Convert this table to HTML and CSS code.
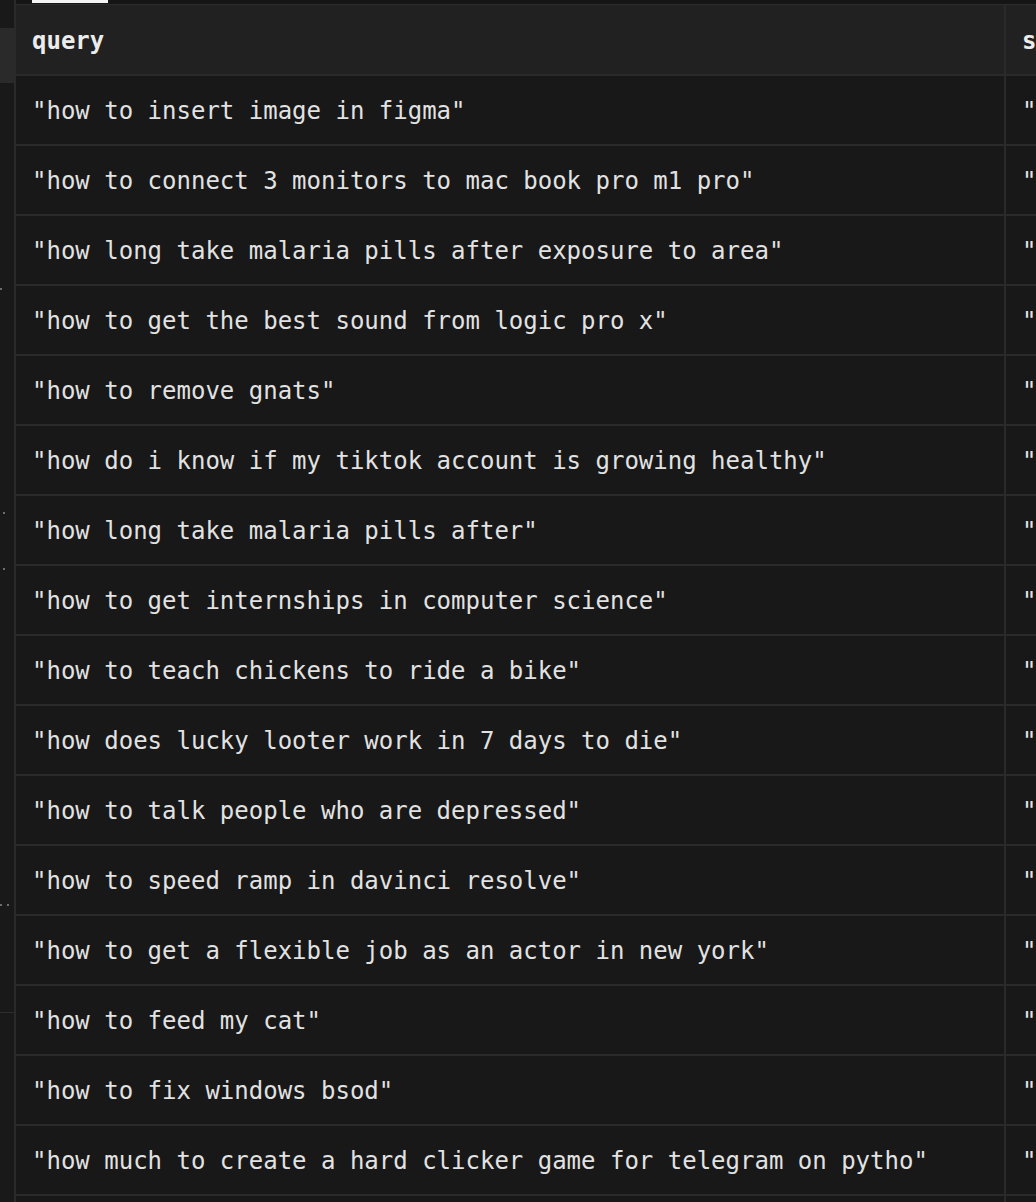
FILE: index.html
```html
<!DOCTYPE html>
<html lang="en">
<head>
<meta charset="utf-8">
<title>Query table</title>
<link rel="stylesheet" href="styles.css">
</head>
<body>
<div class="app">
  <aside class="rail">
    <div class="rail-block"></div>
    <span class="dot d1"></span>
    <span class="dot d2"></span>
    <span class="dot d3"></span>
    <div class="dot-pair"><span class="dot"></span><span class="dot"></span></div>
    <div class="rail-line"></div>
  </aside>
  <main class="pane">
    <div class="tabs"><span class="tab-active"></span></div>
    <div class="table">
      <div class="row head"><div class="cell">query</div><div class="cell">s</div></div>
      <div class="row"><div class="cell">"how to insert image in figma"</div><div class="cell">"</div></div>
      <div class="row"><div class="cell">"how to connect 3 monitors to mac book pro m1 pro"</div><div class="cell">"</div></div>
      <div class="row"><div class="cell">"how long take malaria pills after exposure to area"</div><div class="cell">"</div></div>
      <div class="row"><div class="cell">"how to get the best sound from logic pro x"</div><div class="cell">"</div></div>
      <div class="row"><div class="cell">"how to remove gnats"</div><div class="cell">"</div></div>
      <div class="row"><div class="cell">"how do i know if my tiktok account is growing healthy"</div><div class="cell">"</div></div>
      <div class="row"><div class="cell">"how long take malaria pills after"</div><div class="cell">"</div></div>
      <div class="row"><div class="cell">"how to get internships in computer science"</div><div class="cell">"</div></div>
      <div class="row"><div class="cell">"how to teach chickens to ride a bike"</div><div class="cell">"</div></div>
      <div class="row"><div class="cell">"how does lucky looter work in 7 days to die"</div><div class="cell">"</div></div>
      <div class="row"><div class="cell">"how to talk people who are depressed"</div><div class="cell">"</div></div>
      <div class="row"><div class="cell">"how to speed ramp in davinci resolve"</div><div class="cell">"</div></div>
      <div class="row"><div class="cell">"how to get a flexible job as an actor in new york"</div><div class="cell">"</div></div>
      <div class="row"><div class="cell">"how to feed my cat"</div><div class="cell">"</div></div>
      <div class="row"><div class="cell">"how to fix windows bsod"</div><div class="cell">"</div></div>
      <div class="row"><div class="cell">"how much to create a hard clicker game for telegram on pytho"</div><div class="cell">"</div></div>
      <div class="row"><div class="cell"></div><div class="cell"></div></div>
    </div>
  </main>
</div>
</body>
</html>
```

FILE: styles.css
```css
html, body {
  margin: 0;
  padding: 0;
  height: 100%;
  overflow: hidden;
  background: #181818;
}

.app {
  display: flex;
  height: 1202px;
  width: 1036px;
  overflow: hidden;
}

.rail {
  flex: 0 0 14px;
  width: 14px;
  border-right: 2px solid #2a2a2a;
  background: #191919;
  display: flex;
  flex-direction: column;
}

.rail-block {
  margin-top: 28px;
  height: 55px;
  background: #2a2a2a;
}

.dot {
  display: block;
  width: 2px;
  height: 2px;
  border-radius: 1px;
  background: #8a8a8a;
}

.d1 { margin-top: 205px; margin-left: 0; }
.d2 { margin-top: 222px; margin-left: 3px; }
.d3 { margin-top: 54px; margin-left: 3px; }

.dot-pair {
  display: flex;
  gap: 5px;
  margin-top: 334px;
}

.rail-line {
  margin-top: 106px;
  height: 1px;
  background: #2e2e2e;
}

.pane {
  flex: 1 1 auto;
  min-width: 0;
  display: flex;
  flex-direction: column;
  background: #181818;
}

.tabs {
  height: 4px;
  background: #151515;
  padding-left: 16px;
  flex: 0 0 4px;
}

.tab-active {
  display: block;
  width: 76px;
  height: 3px;
  background: #f4f4f4;
}

.table {
  display: flex;
  flex-direction: column;
  border-top: 1px solid #2c2c2c;
}

.row {
  display: grid;
  grid-template-columns: 988px 400px;
  height: 70px;
  border-top: 2px solid #2a2a2a;
  box-sizing: border-box;
  flex: 0 0 70px;
}

.row.head {
  border-top: none;
  height: 69px;
  flex: 0 0 69px;
  background: #212121;
}

.cell {
  display: flex;
  align-items: center;
  padding-left: 16px;
  padding-top: 2px;
  font-family: "DejaVu Sans Mono", "Liberation Mono", monospace;
  font-size: 24px;
  color: #e2e2e2;
  white-space: pre;
  overflow: hidden;
}

.cell + .cell {
  border-left: 2px solid #2a2a2a;
}

.head .cell {
  font-weight: bold;
  color: #ececec;
}
```
